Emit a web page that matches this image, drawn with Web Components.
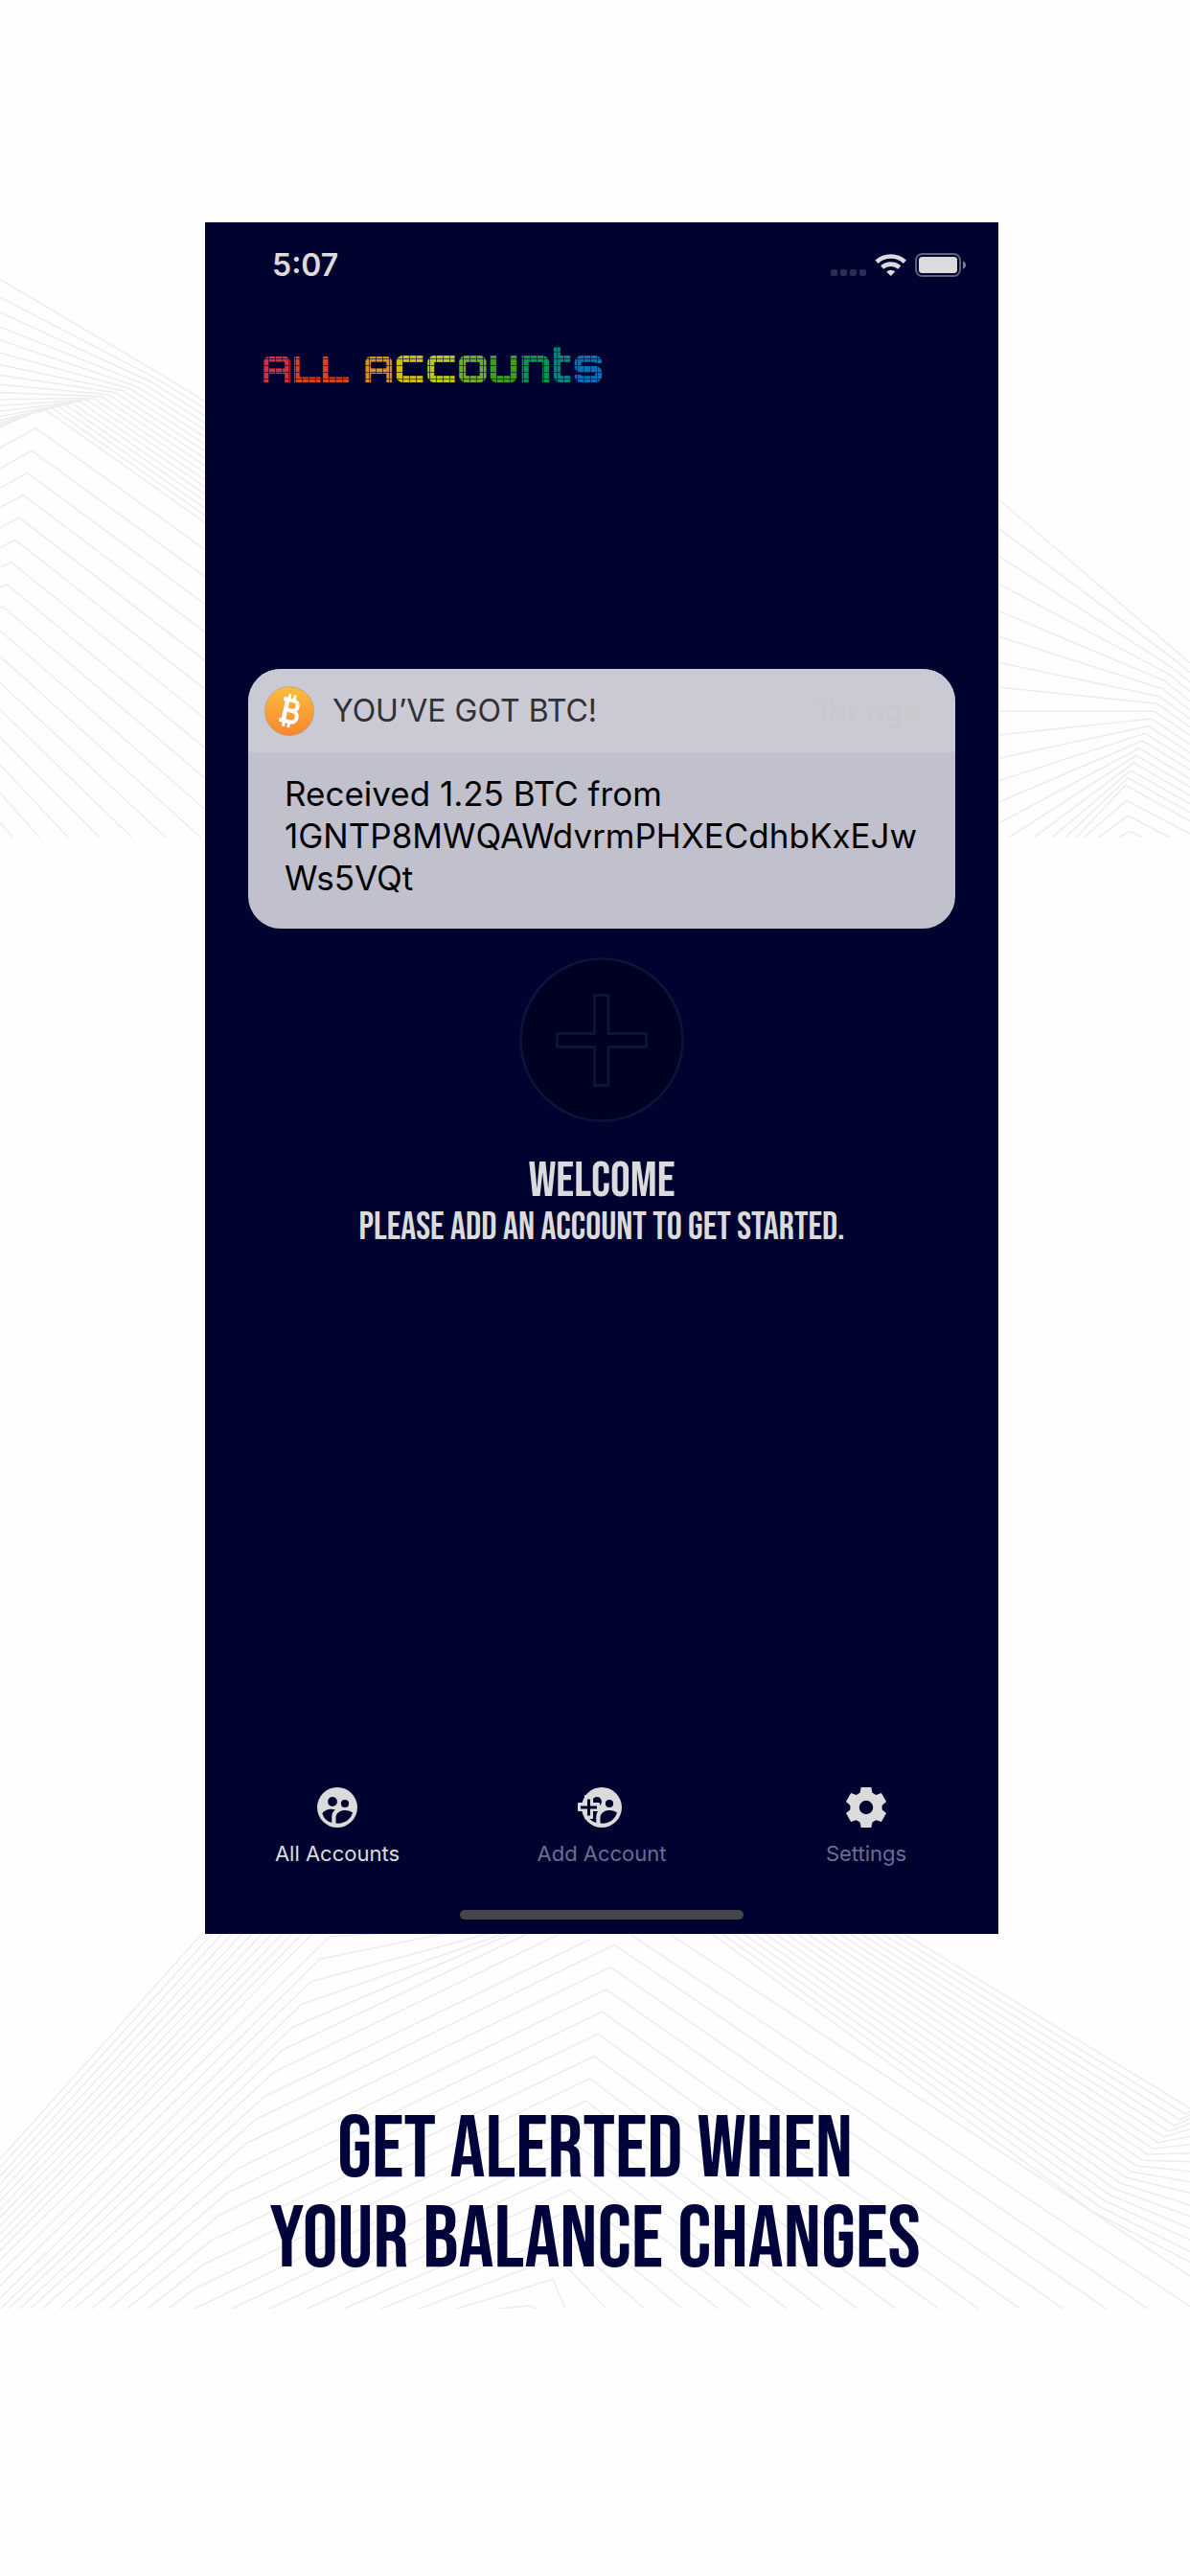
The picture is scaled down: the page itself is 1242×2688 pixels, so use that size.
<!DOCTYPE html>
<html lang="en">
<head>
<meta charset="utf-8">
<meta name="viewport" content="width=device-width, initial-scale=1">
<title>All Accounts</title>
<style>
html { background: #fefefe; }
body { margin: 0; font-family: Inter, "Liberation Sans", sans-serif; --display: "Bebas Neue", "Roboto Condensed", "Liberation Sans", sans-serif; }
</style>
</head>
<body>
<promo-page>
  <phone-screen slot="screen">
    <status-bar slot="status">5:07</status-bar>
    <mosaic-title slot="title"></mosaic-title>
    <push-note slot="note" heading="YOU’VE GOT BTC!" when="1hr ago">Received 1.25 BTC from 1GNTP8MWQAWdvrmPHXECdhbKxEJwWs5VQt</push-note>
    <empty-state slot="body" heading="WELCOME">PLEASE ADD AN ACCOUNT TO GET STARTED.</empty-state>
    <tab-bar slot="tabs">
      <tab-item icon="accounts" active>All Accounts</tab-item>
      <tab-item icon="add">Add Account</tab-item>
      <tab-item icon="settings">Settings</tab-item>
    </tab-bar>
  </phone-screen>
  <span slot="caption">GET ALERTED WHEN<br>YOUR BALANCE CHANGES</span>
</promo-page>

<script>
class Base extends HTMLElement {
  connectedCallback() {
    if (this.shadowRoot) return;
    this.attachShadow({ mode: 'open' }).innerHTML = this.render();
  }
}

/* Line-art backdrop: each entry is a polyline, grouped into clipped panels. */
function linePanels() {
  const out = { a: '', b: '', c: '' };
  const add = (k, ox, oy, pts, sy = 3) => {
    out[k] += 'M' + pts.map(([x, y]) => (ox + x / 3).toFixed(1) + ' ' + (oy + y / sy).toFixed(1)).join('L');
  };
  const S = 2.412;

  // upper left
  const l = [100,145,183,220,253,285,315,341,365,385,402,418,432,445,455,462,468,472];
  l.forEach((y, i) => {
    const r = 408 + i * 17.9, kx = 520 - i * 22.6, s = 0.5 + i * 0.004;
    add('a', 0, 250, [[0, y], [kx, r - s * (642 - kx)], [660, r + s * 18]], S);
  });
  const cl = [524,576,625,674,725,776,826,876,927], cr = [780,848,918,988,1060,1132,1206,1280,1356];
  cl.forEach((y, i) => add('a', 0, 250, [[0, y], [112 - 13 * i, 475 + 56.1 * i], [642, cr[i]]], S));
  [[984,642,1434],[1049,628,1504],[1115,518,1504],[1183,412,1504],[1252,310,1504],[1322,213,1504],[1393,124,1504],[1467,40,1504]]
    .forEach(([y, x2, y2]) => add('a', 0, 250, [[0, y], [x2, y2]], S));

  // upper right
  const rl = [[36,123],[36,213],[36,300],[36,387],[36,472],[36,552],[36,634],[36,711],[36,787],[36,861],[36,934],[36,1004],[36,1072],[36,1138],[70,1181],[148,1181],[205,1181],[247,1181],[280,1181]];
  const rk = [[600,605],[590,627],[580,650],[569,670],[558,692],[550,716],[540,740],[533,763],[525,787],[515,810],[506,833],[496,856],[487,879],[477,902],[468,925],[460,948],[451,972],[442,995],[434,1018]];
  const rr = [635,665,695,724,755,783,810,836,862,890,917,944,970,998,1024,1050,1076,1103,1130];
  rl.forEach((p, i) => add('b', 1030, 480, [p, rk[i], [636, rr[i]]]));
  add('b', 1030, 480, [[305,1181],[437,1066],[636,1170]]);
  add('b', 1030, 480, [[350,1181],[442,1114],[572,1181]]);
  add('b', 1030, 480, [[415,1181],[446,1162],[487,1181]]);

  // lower left, running up to the chevron tips and down the right side
  for (let i = 0; i < 12; i++) add('c', 0, 2015, [[640 + i * 31.5, 0], [0, 715 + i * 26]]);
  const k = [[1032,17],[1002,88],[973,158],[943,230],[914,302],[885,372],[857,442],[828,518],[800,590],[770,665],[742,745],[712,820],[685,890],[660,970],[635,1045],[610,1120]];
  const ke = [[0,1030],[0,1070],[0,1110],[0,1150],[0,1184],[25,1184],[60,1184],[92,1184],[130,1184],[185,1184],[230,1184],[285,1184],[340,1184],[395,1184],[460,1184],[525,1184]];
  const ku = [[1300,0],[1430,0],[1560,0],[1600,0],[1620,0],[1670,0],[1750,10],[1850,25]];
  const tip = j => j < 16 ? [1924 - 12.8 * j, 43 + 69.8 * j] : [1656, 1173];
  const rb = [1430,1300,1165,1030,900,775,640,520,410,300,190,85,-27,-146,-265,-396,-480];
  k.forEach((p, i) => {
    if (i < 8) add('c', 0, 2015, [ke[i], p, ku[i]]);
    else add('c', 0, 2015, [ke[i], p, tip(i - 8), [rb[i - 8] + 2166, 1184]]);
  });
  for (let j = 8; j < 17; j++) add('c', 0, 2015, [[605 + (j - 8) * 117, 1184], tip(j), [rb[j] + 2166, 1184]]);
  add('c', 722, 2015, [[-65,12],[1560,1080]]);
  add('c', 722, 2015, [[-190,12],[1560,1175]]);
  const re = [555,565,575,587,602,620,643,668,695,722,752,785,820,858,893,930,967,1003,1036];
  re.forEach((y, i) => {
    const top = [650 - i * 33.3, 0], kink = [1562 - i * 17, 555 + i * 18];
    add('c', 722, 2015, i ? [top, kink, [1560, y]] : [top, [1560, y]]);
  });
  return out;
}

customElements.define('line-backdrop', class extends Base {
  render() {
    const p = linePanels();
    return `<style>
      :host { display: block; }
      svg { display: block; width: 100%; height: auto; }
      path { fill: none; stroke: #ededed; stroke-width: 1.6; }
    </style>
    <svg viewBox="0 0 1242 2688" aria-hidden="true">
      <defs>
        <clipPath id="u"><rect width="1242" height="874"/></clipPath>
        <clipPath id="d"><rect y="2000" width="1242" height="409"/></clipPath>
      </defs>
      <path clip-path="url(#u)" d="${p.a}"/>
      <path clip-path="url(#u)" d="${p.b}"/>
      <path clip-path="url(#d)" d="${p.c}"/>
    </svg>`;
  }
});

customElements.define('promo-page', class extends Base {
  render() {
    return `<style>
      :host { display: block; position: relative; overflow: hidden; padding-bottom: 300px; }
      line-backdrop { position: absolute; inset: 0 0 auto 0; }
      main { position: relative; padding: 232px 200px 0 214px; }
      h2 { position: relative; margin: 179px 0 0; text-align: center; color: #01033b;
        font: 400 92px/94px var(--display); }
    </style>
    <line-backdrop></line-backdrop>
    <main><slot name="screen"></slot></main>
    <h2><slot name="caption"></slot></h2>`;
  }
});

customElements.define('phone-screen', class extends Base {
  render() {
    return `<style>
      :host { display: flex; flex-direction: column; background: #000330; color: #dbdbdb; }
      .note { padding: 288px 45px 0; }
      .body { padding-top: 30px; }
      .tabs { padding-top: 561px; }
      .home { align-self: center; width: 296px; height: 10px; border-radius: 5px; background: #454545; margin: 42px 0 15px; }
    </style>
    <slot name="status"></slot>
    <slot name="title"></slot>
    <div class="note"><slot name="note"></slot></div>
    <div class="body"><slot name="body"></slot></div>
    <div class="tabs"><slot name="tabs"></slot></div>
    <div class="home"></div>`;
  }
});

customElements.define('status-bar', class extends Base {
  render() {
    return `<style>
      :host { display: flex; align-items: center; justify-content: space-between; padding: 25px 34px 0 70px; font: 600 32px/40px Inter, sans-serif; }
      svg { display: block; width: 142px; height: 26px; }
    </style>
    <time><slot></slot></time>
    <svg viewBox="0 0 142 26" role="img" aria-label="Wi-Fi and battery">
      <g fill="#2b2d55"><rect x="1" y="17" width="7" height="7" rx="2"/><rect x="11" y="17" width="7" height="7" rx="2"/><rect x="21" y="17" width="7" height="7" rx="2"/><rect x="31" y="17" width="7" height="7" rx="2"/></g>
      <g fill="none" stroke="#dbdbdb" stroke-width="4.6"><path d="M49 9.2a22 22 0 0 1 29.400 0"/><path d="M54.600 15a14 14 0 0 1 18.200 0"/></g>
      <path d="M59.200 19.400a7 7 0 0 1 9 0L63.700 24z" fill="#dbdbdb"/>
      <rect x="90" y="1" width="46" height="23" rx="6.500" fill="none" stroke="#5d5f7c" stroke-width="2"/>
      <rect x="93" y="4" width="40" height="17" rx="3.500" fill="#dbdbdb"/>
      <path d="M139 8.500q3 1 3 4t-3 4z" fill="#7d7e92"/>
    </svg>`;
  }
});

customElements.define('mosaic-title', class extends Base {
  render() {
    const cells = [['A','#d0313f',1],['L','#d9441c',1],['L','#d9441c',1],[' ',''],['A','#db9320',1],['c','#cdbf0c'],['c','#b9cc12'],['o','#6fad30'],['u','#3f9d1d'],['n','#07984a'],['t','#0c8580'],['s','#0770b8']];
    return `<style>
      :host { display: block; padding: 56px 59px 0; }
      h1 { position: relative; width: fit-content; height: 57px; margin: 0; white-space: pre; font: 800 48px/56px Orbitron, "DejaVu Sans", sans-serif; }
      .cap { font-size: 38px; line-height: 1; }
      h1::after { content: ""; position: absolute; inset: 0;
        background: repeating-linear-gradient(90deg, #000330a0 0 1px, transparent 1px 7px), repeating-linear-gradient(0deg, #000330a0 0 1px, transparent 1px 7px); }
    </style><h1>${cells.map(([t, c, cap]) => `<span${cap ? ' class="cap"' : ''} style="color:${c}">${t}</span>`).join('')}</h1>`;
  }
});

customElements.define('push-note', class extends Base {
  render() {
    return `<style>
      :host { display: block; }
      article { border-radius: 34px; overflow: hidden; background: #c1c1cd; color: #000; }
      header { display: flex; align-items: center; gap: 19px; height: 87px; padding: 0 35px 0 17px; background: #cacad4; font: 400 32px/40px Inter, sans-serif; color: #303036; }
      svg { width: 52px; height: 52px; flex: none; }
      strong { flex: 1; font-weight: 400; }
      time { color: #c8c8cb; }
      p { margin: 0; padding: 21px 30px 31px 38px; font: 400 35px/44px Inter, sans-serif; overflow-wrap: anywhere; }
    </style>
    <article>
      <header>
        <svg viewBox="0 0 52 52" aria-hidden="true">
          <defs><linearGradient id="g" x2="0" y2="1"><stop stop-color="#fabd3f"/><stop offset="1" stop-color="#f7862f"/></linearGradient></defs>
          <circle cx="26" cy="26" r="25.500" fill="url(#g)" stroke="#b08a6a" stroke-width=".5"/>
          <g transform="rotate(13 26 26)" fill="none" stroke="#fff">
            <path d="M17.500 14.500H28a5.200 5.200 0 0 1 0 10.800H21.500M28 25.300h1.200a5.800 5.800 0 0 1 0 11.600H17.500" stroke-width="4.200"/>
            <path d="M21.800 13v25" stroke-width="4.600"/>
            <path d="M23 8.500v6M28.500 8.500v6M23 37v6M28.500 37v6" stroke-width="3"/>
          </g>
        </svg>
        <strong>${this.getAttribute('heading')}</strong>
        <time>${this.getAttribute('when')}</time>
      </header>
      <p><slot></slot></p>
    </article>`;
  }
});

customElements.define('empty-state', class extends Base {
  render() {
    return `<style>
      :host { display: flex; flex-direction: column; align-items: center; text-align: center; font-family: var(--display); }
      button { display: block; padding: 0; border: 0; background: none; cursor: pointer; }
      svg { display: block; width: 172px; height: 172px; }
      h2 { margin: 37px 0 0; font-size: 52px; line-height: 50px; font-weight: 400; }
      p { margin: 0; font-size: 40px; line-height: 46px; }
    </style>
    <button type="button" aria-label="Add account"><svg viewBox="0 0 172 172" aria-hidden="true">
      <circle cx="86" cy="86" r="84.500" fill="#000223" stroke="#101237" stroke-width="2.500"/>
      <path d="M78.500 39.500h14.500v40h39.500v14h-39.500v40h-14.500v-40H39.500v-14h39z" fill="#000225" stroke="#141636" stroke-width="2.500"/>
    </svg></button>
    <h2>${this.getAttribute('heading')}</h2>
    <p><slot></slot></p>`;
  }
});

customElements.define('tab-bar', class extends Base {
  render() {
    return `<style>:host { display: block; } nav { display: grid; grid-template-columns: repeat(3, 1fr); }</style><nav><slot></slot></nav>`;
  }
});

const FACES = '<circle cx="21" cy="21" r="21" fill="#dbdbdb"/><g fill="#000330"><circle cx="16" cy="15" r="4.900"/><circle cx="29" cy="17" r="4.100"/><path d="M5.500 27c2-3 8-5.500 13.500-3.500-2.500 1.500-3.700 4-3.700 7v6.500C10 35.500 6 31.500 5.500 27z"/><path d="M19.500 37.500v-6c0-5 5-7.500 9.500-7.500 3.500 0 6 1 8 2.500-2 7-8.500 12-17.500 11z"/></g>';
const ICONS = {
  accounts: FACES,
  add: FACES + '<path d="M3.500 11.500h8v8h7v8h-7v8h-8v-8h-7v-8h7z" transform="translate(0 -3)" fill="#dbdbdb" stroke="#dbdbdb" stroke-linejoin="round"/><path d="M6 12.500h3v7h7v3h-7v7h-3v-7h-7v-3h7z" fill="#000330"/>',
  settings: '<path fill="#dbdbdb" fill-rule="evenodd" d="M15.700 0h10.600l1.200 5.800 3.800 2.200 5.600-1.900 5.100 9-4.400 3.900v4.200l4.400 3.900-5.100 9-5.600-1.900-3.800 2.200-1.200 5.600H15.700l-1.200-5.600-3.800-2.200-5.600 1.900-5.100-9 4.400-3.900v-4.200L0 15.100l5.100-9 5.600 1.900 3.800-2.200zM21 13.800a7.200 7.200 0 1 0 0 14.400 7.200 7.200 0 0 0 0-14.400z"/>'
};

customElements.define('tab-item', class extends Base {
  render() {
    return `<style>
      :host { display: block; }
      a { display: flex; flex-direction: column; align-items: center; gap: 10px; color: #6b6d92; text-decoration: none; font: 400 22px/34px Inter, sans-serif; }
      :host([active]) a { color: #dbdbdb; }
      svg { display: block; width: 42px; height: 42px; overflow: visible; }
    </style>
    <a href="#${this.getAttribute('icon')}"><svg viewBox="0 0 42 42" aria-hidden="true">${ICONS[this.getAttribute('icon')]}</svg><span><slot></slot></span></a>`;
  }
});
</script>
</body>
</html>
